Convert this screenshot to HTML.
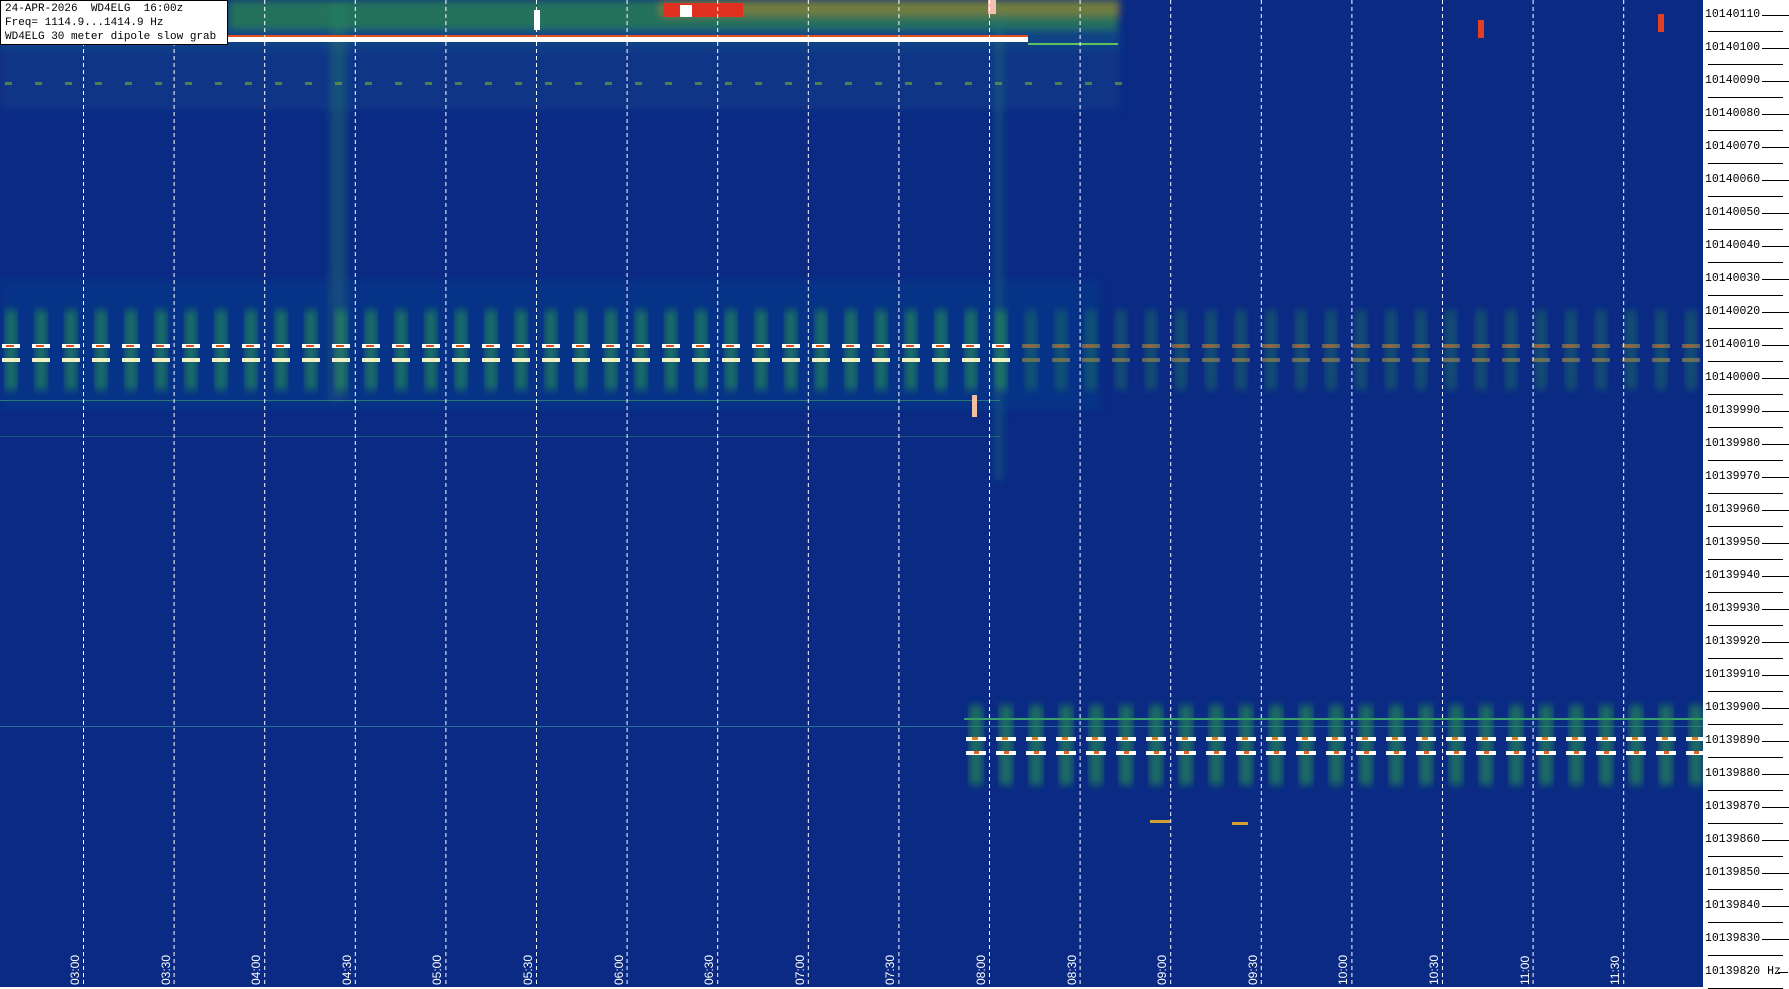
<!DOCTYPE html>
<html><head><meta charset="utf-8">
<style>
html,body{margin:0;padding:0;background:#fff;width:1789px;height:989px;overflow:hidden}
#plot{position:absolute;left:0;top:0;width:1703px;height:987px;background:#0a2a84;overflow:hidden}
#plot svg{position:absolute;left:0;top:0}
.lbl{position:absolute;left:0;top:0;width:228px;height:45px;background:#fff;border:1px solid #000;box-sizing:border-box;font:11px/14px "Liberation Mono",monospace;color:#000;padding:1px 0 0 4px;white-space:pre}
.ax{position:absolute;font:11.5px/12px "Liberation Mono",monospace;color:#000}
.ln{position:absolute;height:1px;background:#000}
.t{position:absolute;color:#fff;font:12px "Liberation Sans",sans-serif;transform:rotate(-90deg);transform-origin:left top;white-space:nowrap}
</style></head><body>
<div id="plot">
<svg width="1703" height="987" id="sv">
<defs>
<filter id="b3"><feGaussianBlur stdDeviation="4"/></filter>
<filter id="b1"><feGaussianBlur stdDeviation="1"/></filter>
</defs>
<g filter="url(#b3)">
<rect x="228" y="0" width="890" height="30" fill="#2f8a50" opacity=".75"/>
<rect x="0" y="30" width="1120" height="20" fill="#1c5a8a" opacity=".5"/>
<rect x="0" y="50" width="1120" height="60" fill="#175090" opacity=".3"/>
<rect x="330" y="0" width="16" height="400" fill="#2a8a60" opacity=".35"/>
<rect x="995" y="0" width="8" height="480" fill="#1e7a70" opacity=".4"/>
<rect x="0" y="280" width="1100" height="130" fill="#124a90" opacity=".3"/>
<rect x="660" y="0" width="460" height="16" fill="#c08a20" opacity=".5"/>
</g>
<rect x="228" y="37" width="800" height="5" fill="#fff"/>
<rect x="228" y="35" width="800" height="2" fill="#e05020"/>
<rect x="1028" y="43" width="90" height="2" fill="#60c060"/>
<rect x="663" y="3" width="80" height="14" fill="#e03020"/>
<rect x="680" y="5" width="12" height="12" fill="#fff"/>
<rect x="534" y="10" width="6" height="20" fill="#fff"/>
<rect x="988" y="0" width="8" height="14" fill="#f0c0b0"/>
<rect x="1478" y="20" width="6" height="18" fill="#e04020"/>
<rect x="1658" y="14" width="6" height="18" fill="#e04020"/>
<rect x="0" y="400" width="1000" height="1" fill="#3a9a70" opacity=".7"/>
<rect x="0" y="436" width="1000" height="1" fill="#2a8a70" opacity=".5"/>
<rect x="0" y="726" width="1703" height="1" fill="#3aa0a0" opacity=".6"/>
<rect x="964" y="718" width="739" height="2" fill="#3aa070"/>
<rect x="972" y="395" width="5" height="22" fill="#f0c0a0"/>
<g id="dash"></g>
<g id="grid" stroke="#fff" stroke-width="1" stroke-dasharray="4,3"></g>
</svg>
<div class="lbl">24-APR-2026  WD4ELG  16:00z
Freq= 1114.9...1414.9 Hz
WD4ELG 30 meter dipole slow grab</div>
</div>
<div id="axis"></div>
<div id="times"></div>
<script>
var NS="http://www.w3.org/2000/svg";
function r(p,x,y,w,h,f,o,flt){var e=document.createElementNS(NS,"rect");e.setAttribute("x",x);e.setAttribute("y",y);e.setAttribute("width",w);e.setAttribute("height",h);e.setAttribute("fill",f);if(o!=null)e.setAttribute("opacity",o);if(flt)e.setAttribute("filter",flt);p.appendChild(e);}
var d=document.getElementById("dash");
for(var i=0;i<57;i++){var x=2+i*30;if(x>1700)break;var s=x<1000?1:0.55;
r(d,x+3,310,12,80,"#2a9a50",0.6*s,"url(#b3)");
r(d,x,344,18,4,x<1000?"#fff":"#b09040",s);r(d,x+4,345,8,2,"#e05020",s);
r(d,x,358,18,4,x<1000?"#f0f0c0":"#b09040",s);}
for(var i=0;i<25;i++){var x=966+i*30;if(x>1700)break;
r(d,x+3,705,14,80,"#2a9a50",0.6,"url(#b3)");
r(d,x,737,20,4,"#fff");r(d,x+6,737,6,3,"#e08020");
r(d,x,751,20,4,"#fff");r(d,x+8,751,5,3,"#e06020");}
for(var i=0;i<38;i++){var x=5+i*30;r(d,x,82,7,3,"#6aa040",0.7);}
r(d,1150,820,20,3,"#d0a030");r(d,1232,822,16,3,"#d0a030");
var g=document.getElementById("grid"),tm=document.getElementById("times");
var T=["03:00","03:30","04:00","04:30","05:00","05:30","06:00","06:30","07:00","07:30","08:00","08:30","09:00","09:30","10:00","10:30","11:00","11:30"];
for(var i=0;i<18;i++){var x=83+i*90.6;var l=document.createElementNS(NS,"line");l.setAttribute("x1",x+0.5);l.setAttribute("x2",x+0.5);l.setAttribute("y1",0);l.setAttribute("y2",987);g.appendChild(l);
var t=document.createElement("div");t.className="t";t.textContent=T[i];t.style.left=(x-15)+"px";t.style.top="985px";tm.appendChild(t);}
var ax=document.getElementById("axis");
for(var k=0;k<30;k++){var y=15+33*k;var v=10140110-10*k;var a=document.createElement("div");a.className="ax";a.style.left="1705px";a.style.top=(y-6)+"px";a.textContent=(k==29?v+" Hz":v);ax.appendChild(a);
var l=document.createElement("div");l.className="ln";l.style.left=(k==29?"1778px":"1762px");l.style.width=(k==29?"10px":"27px");l.style.top=y+"px";ax.appendChild(l);
var l2=document.createElement("div");l2.className="ln";l2.style.left="1708px";l2.style.width="75px";l2.style.top=(y+16)+"px";ax.appendChild(l2);}
</script>
</body></html>
